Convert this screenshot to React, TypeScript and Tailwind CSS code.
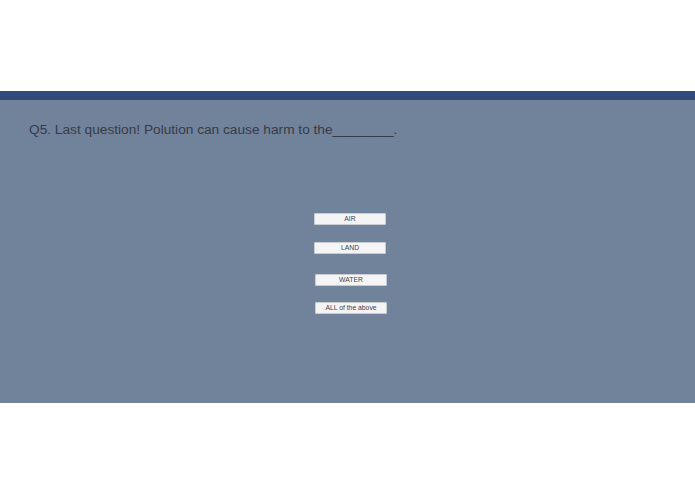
export default function App() {
  const opts = [
    { label: "AIR", cls: "ml-[314px] mt-[75px]" },
    { label: "LAND", cls: "ml-[314px] mt-[17px]" },
    { label: "WATER", cls: "ml-[315px] mt-[20px]" },
    { label: "ALL of the above", cls: "ml-[315px] mt-[16px]" },
  ];
  return (
    <div className="w-[695px] h-[494px] bg-white flex flex-col" style={{ fontFamily: '"Liberation Sans", Arial, sans-serif' }}>
      <div className="h-[91px]" />
      <div className="h-[312px] bg-[#71829b] flex flex-col">
        <div className="h-[9px] bg-[#2f4b7c]" />
        <div className="pl-[29px] pt-[22px] text-[13.7px] leading-[16px] text-[#353c48]">
          Q5. Last question! Polution can cause harm to the________.
        </div>
        {opts.map((o) => (
          <div
            key={o.label}
            className={`${o.cls} w-[72px] h-[12px] bg-[#f4f4f4] border border-[#c9ccd1] rounded-[1px] flex items-center justify-center text-[6.8px] leading-none text-[#444444]`}
          >
            {o.label}
          </div>
        ))}
      </div>
    </div>
  );
}
